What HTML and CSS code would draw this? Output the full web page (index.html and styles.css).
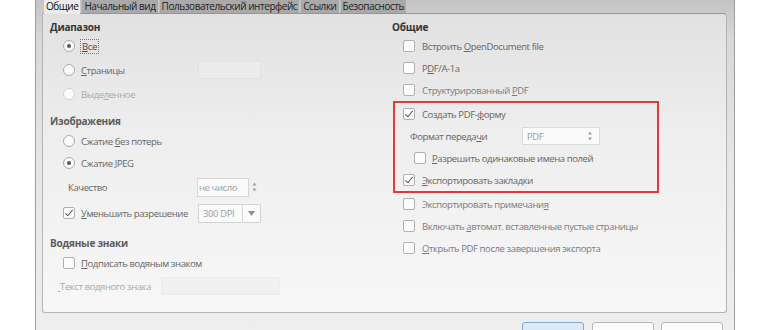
FILE: index.html
```html
<!DOCTYPE html>
<html lang="ru">
<head>
    <meta charset="UTF-8">
    <title>Экспорт в PDF</title>
    <link rel="stylesheet" href="styles.css">
</head>
<body>

    <div class="window">
        <!-- Tabs -->
        <div class="tabs">
            <span class="tab active">Общие</span>
            <span class="tab">Начальный вид</span>
            <span class="tab">Пользовательский интерфейс</span>
            <span class="tab">Ссылки</span>
            <span class="tab">Безопасность</span>
        </div>

        <!-- General page -->
        <div class="panel">
            <div class="col left">
                <div class="section range">
                    <div class="title">Диапазон</div>
                    <div class="row"><span class="radio on"></span><span class="label focus"><u>В</u>се</span></div>
                    <div class="row"><span class="radio"></span><span class="label wide"><u>С</u>траницы</span><span class="entry pages"></span></div>
                    <div class="row off"><span class="radio"></span><span class="label">Выде<u>л</u>енное</span></div>
                </div>

                <div class="section images">
                    <div class="title muted">Изображения</div>
                    <div class="row"><span class="radio"></span><span class="label">Сжатие <u>б</u>ез потерь</span></div>
                    <div class="row"><span class="radio on"></span><span class="label">Сжатие <u>J</u>PEG</span></div>
                    <div class="row field quality">
                        <span class="label">Качество</span>
                        <span class="entry spin">не число</span>
                        <svg class="spinner" width="11" height="14" viewBox="0 0 11 14">
                            <path d="M3.5 5.5 L5.5 2.5 L7.5 5.5 Z" fill="#a0a0a0"/>
                            <path d="M3.5 8.5 L5.5 11.5 L7.5 8.5 Z" fill="#a0a0a0"/>
                        </svg>
                    </div>
                    <div class="row field"><span class="check on"></span><span class="label wide"><u>У</u>меньшить разрешение</span>
                        <span class="combo dpi"><span class="value">300 DPI</span>
                            <span class="drop"><svg width="7" height="5" viewBox="0 0 7 5"><path d="M0 0 H7 L3.5 5 Z" fill="#909090"/></svg></span>
                        </span>
                    </div>
                </div>

                <div class="section marks">
                    <div class="title muted">Водяные знаки</div>
                    <div class="row"><span class="check"></span><span class="label"><u>П</u>одписать водяным знаком</span></div>
                    <div class="row field mark-text off">
                        <span class="label"><u>&nbsp;</u>Текст водяного знака</span>
                        <span class="entry mark"></span>
                    </div>
                </div>
            </div>

            <div class="col right">
                <div class="title">Общие</div>
                <div class="row"><span class="check"></span><span class="label">Встроить <u>O</u>penDocument file</span></div>
                <div class="row"><span class="check"></span><span class="label">P<u>D</u>F/A-1a</span></div>
                <div class="row light"><span class="check"></span><span class="label">Структурированный <u>P</u>DF</span></div>

                <div class="highlight">
                    <div class="row"><span class="check on"></span><span class="label">Создать PDF-<u>ф</u>орму</span></div>
                    <div class="row format">
                        <span class="label">Формат переда<u>ч</u>и</span>
                        <span class="combo pdf"><span class="value">PDF</span>
                            <svg class="spinner" width="18" height="14" viewBox="0 0 18 14">
                                <path d="M7 5.5 L9 2.5 L11 5.5 Z" fill="#a0a0a0"/>
                                <path d="M7 8.5 L9 11.5 L11 8.5 Z" fill="#a0a0a0"/>
                            </svg>
                        </span>
                    </div>
                    <div class="row nested"><span class="check"></span><span class="label"><u>Р</u>азрешить одинаковые имена полей</span></div>
                    <div class="row"><span class="check on"></span><span class="label"><u>Э</u>кспортировать закладки</span></div>
                </div>

                <div class="row light"><span class="check"></span><span class="label">Экспортировать примечани<u>я</u></span></div>
                <div class="row light"><span class="check"></span><span class="label">Включать <u>а</u>втомат. вставленные пустые страницы</span></div>
                <div class="row light"><span class="check"></span><span class="label"><u>О</u>ткрыть PDF после завершения экспорта</span></div>
            </div>
        </div>

        <!-- Dialog buttons -->
        <div class="buttons">
            <span class="btn default"></span>
            <span class="btn"></span>
            <span class="btn"></span>
        </div>
    </div>

</body>
</html>
```

FILE: styles.css
```css
/* Page */
body {
    margin: 0;
    background: #ffffff;
    font-family: 'Open Sans', 'Noto Sans', sans-serif;
    font-size: 9.5px;
    color: #666;
    overflow: hidden;
}

.window {
    margin-left: 35px;
    width: 698px;
    height: 360px;
    border-left: 1px solid #9c9c9c;
    border-right: 1px solid #9c9c9c;
    background: linear-gradient(#c4c4c4 0px, #d8d8d8 40px, #e6e6e6 160px, #eeeeee 330px);
}

/* Tabs */
.tabs {
    display: flex;
    height: 13px;
    padding-left: 8px;
}

.tab {
    padding: 0 2px;
    margin-right: 1px;
    font-size: 10px;
    line-height: 12px;
    background: #a9a9a9;
    color: #222;
    border-left: 1px solid #bdbdbd;
    white-space: nowrap;
    letter-spacing: -0.45px;
}

.tab.active {
    background: #ececec;
    color: #111;
    border-left: none;
    height: 14px;
}

/* Panel */
.panel {
    display: grid;
    grid-template-columns: 349px 1fr;
    margin: 0 7px 0 6px;
    height: 300px;
    border: 1px solid #b4b4b4;
    border-top-color: #969696;
    border-radius: 0 4px 3px 3px;
    background: linear-gradient(#e1e1e1, #eeeeee 120px, #f7f7f7);
    box-sizing: border-box;
}

.col {
    display: flex;
    flex-direction: column;
    padding-top: 3px;
}

.left {
    padding-left: 7px;
}

.title {
    height: 20px;
    line-height: 20px;
    font-weight: bold;
    font-size: 10px;
    color: #333;
    letter-spacing: -0.2px;
}

.title.muted {
    color: #5c5c5c;
}

.row {
    display: flex;
    align-items: center;
    gap: 6px;
    height: 22px;
    white-space: nowrap;
    letter-spacing: -0.4px;
}

.label u {
    text-decoration: underline;
    text-underline-offset: 1px;
}

.off {
    color: #ababab;
}

.light {
    color: #7c7c7c;
}

/* Left column spacing */
.range .title {
    margin-bottom: -3px;
}

.range .row {
    height: 24px;
    padding-left: 13px;
}

.images {
    margin-top: 5px;
}

.images .title {
    margin-bottom: -1px;
}

.images .row,
.marks .row {
    padding-left: 13px;
}

.row.field {
    height: 26px;
}

.marks {
    margin-top: 7px;
}

.marks .row {
    height: 20px;
}

.marks .row.field {
    height: 26px;
}

.row.quality {
    padding-left: 18px;
    gap: 0;
}

.quality .label {
    width: 129px;
}

.row.mark-text {
    padding-left: 8px;
    gap: 0;
}

.mark-text .label {
    width: 103px;
}

.label.wide {
    width: 111px;
}

.label.focus {
    outline: 1px dotted #777;
    padding: 0 1px;
    color: #4a4a4a;
}

/* Radios and checkboxes */
.radio {
    width: 10px;
    height: 10px;
    border: 1px solid #ababab;
    border-radius: 50%;
    background: #fbfbfb;
    flex: none;
    position: relative;
}

.radio.on::after {
    content: "";
    position: absolute;
    left: 3px;
    top: 3px;
    width: 4px;
    height: 4px;
    border-radius: 50%;
    background: #555;
}

.off .radio {
    border-color: #d2d2d2;
}

.check {
    width: 10px;
    height: 10px;
    border: 1px solid #b0b0b0;
    border-radius: 2px;
    background: #fcfcfc;
    flex: none;
    position: relative;
}

.check.on::after {
    content: "";
    position: absolute;
    left: 3px;
    top: 0px;
    width: 3px;
    height: 7px;
    border: solid #5a5a5a;
    border-width: 0 1.5px 1.5px 0;
    transform: rotate(40deg);
}

/* Entries */
.entry {
    height: 18px;
    box-sizing: border-box;
    border: 1px solid #e2e2e2;
    background: #ececec;
    flex: none;
}

.entry.pages {
    width: 63px;
}

.entry.spin {
    width: 52px;
    height: 19px;
    background: #fafafa;
    border-color: #d6d6d6;
    color: #a0a0a0;
    padding-left: 1px;
    line-height: 17px;
}

.entry.mark {
    width: 119px;
    background: #f0f0f0;
    border-color: #ececec;
}

.spinner {
    flex: none;
}

.combo {
    display: flex;
    align-items: center;
    box-sizing: border-box;
    height: 19px;
    border: 1px solid #d4d4d4;
    background: #fafafa;
    color: #a0a0a0;
    flex: none;
}

.combo.dpi {
    width: 63px;
}

.combo .value {
    flex: 1;
    padding-left: 4px;
}

.combo .drop {
    display: flex;
    align-items: center;
    justify-content: center;
    width: 17px;
    height: 17px;
    border-left: 1px solid #d8d8d8;
}

/* Right column */
.right .title {
    margin-bottom: -2px;
}

.right > .row {
    padding-left: 11px;
    gap: 7px;
}

.highlight {
    width: 266px;
    margin-left: 1px;
    border: 2px solid #e03a3a;
    box-sizing: border-box;
}

.highlight .row {
    padding-left: 8px;
    gap: 7px;
}

.highlight .row.format {
    padding-left: 15px;
    gap: 0;
}

.format .label {
    width: 112px;
}

.combo.pdf {
    width: 78px;
    height: 18px;
    border-color: #dadada;
}

.highlight .row.nested {
    padding-left: 19px;
    gap: 6px;
}

/* Buttons */
.buttons {
    display: flex;
    justify-content: flex-end;
    gap: 7px;
    margin-top: 9px;
    padding-right: 11px;
}

.btn {
    width: 62px;
    height: 26px;
    box-sizing: border-box;
    border: 1px solid #b8b8b8;
    border-radius: 3px;
    background: #fbfbfb;
}

.btn.default {
    border-color: #7fa9d6;
    background: #dde9f6;
    margin-right: 1px;
}
```
